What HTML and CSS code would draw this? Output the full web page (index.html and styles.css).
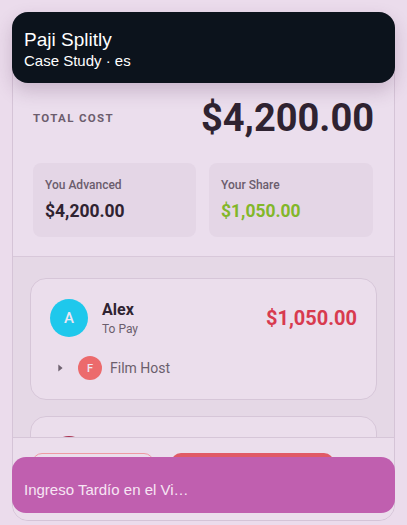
FILE: index.html
```html
<!DOCTYPE html>
<html lang="es">
<head>
<meta charset="utf-8">
<title>Paji Splitly</title>
<link rel="stylesheet" href="styles.css">
</head>
<body>
<div class="card">
  <div class="summary">
    <div class="total-row">
      <span class="total-label">TOTAL COST</span>
      <span class="total-value">$4,200.00</span>
    </div>
    <div class="stats">
      <div class="stat">
        <div class="stat-label">You Advanced</div>
        <div class="stat-value">$4,200.00</div>
      </div>
      <div class="stat">
        <div class="stat-label">Your Share</div>
        <div class="stat-value green">$1,050.00</div>
      </div>
    </div>
  </div>
  <div class="people">
    <div class="person">
      <div class="person-main">
        <div class="avatar cyan">A</div>
        <div class="person-info">
          <div class="person-name">Alex</div>
          <div class="person-sub">To Pay</div>
        </div>
        <div class="person-amount">$1,050.00</div>
      </div>
      <div class="person-detail">
        <svg class="caret" width="5" height="8" viewBox="0 0 5 8"><path d="M0.3 0.5 L4.6 4 L0.3 7.5 Z" fill="#6e6270"/></svg>
        <div class="avatar small coral">F</div>
        <span class="detail-name">Film Host</span>
      </div>
    </div>
    <div class="person">
      <div class="person-main">
        <div class="avatar rose">M</div>
        <div class="person-info">
          <div class="person-name">Maya</div>
          <div class="person-sub">To Pay</div>
        </div>
        <div class="person-amount">$1,050.00</div>
      </div>
    </div>
  </div>
  <div class="footer">
    <button class="btn outline">Cancel</button>
    <button class="btn filled">Settle</button>
  </div>
</div>

<div class="header-overlay">
  <div class="app-title">Paji Splitly</div>
  <div class="app-sub">Case Study · es</div>
</div>

<div class="banner">Ingreso Tardío en el Vi…</div>
</body>
</html>
```

FILE: styles.css
```css
* { box-sizing: border-box; }

html, body {
  margin: 0;
  padding: 0;
  background: #ebdcec;
  font-family: Roboto, "Liberation Sans", sans-serif;
  overflow: hidden;
}

body {
  width: 407px;
  height: 525px;
  position: relative;
}

.card {
  margin: 12px 12px 0 12px;
  height: 509px;
  border: 1px solid #d5c4d7;
  border-radius: 16px;
  background: #ebdeed;
  overflow: hidden;
  display: flex;
  flex-direction: column;
}

.summary {
  padding: 81px 20px 19px 20px;
  border-bottom: 1px solid #d8c8da;
}

.total-row {
  display: flex;
  justify-content: space-between;
  align-items: center;
  height: 48px;
}

.total-label {
  font-size: 11.5px;
  font-weight: 700;
  letter-spacing: 1.35px;
  color: #6b5d6d;
}

.total-value {
  font-size: 38px;
  font-weight: 700;
  color: #2f2331;
}

.stats {
  margin-top: 21px;
  display: grid;
  grid-template-columns: 163px 164px;
  column-gap: 13px;
}

.stat {
  height: 74px;
  background: #e4d6e6;
  border-radius: 8px;
  padding: 14px 12px 0 12px;
}

.stat-label {
  font-size: 12px;
  font-weight: 500;
  color: #6b5d6d;
  line-height: 16px;
}

.stat-value {
  margin-top: 7px;
  font-size: 17.5px;
  font-weight: 700;
  color: #2f2331;
  line-height: 22px;
}

.stat-value.green { color: #82b72a; }

.people {
  flex: 1;
  background: #e5d8e6;
  padding: 21px 17px 0 17px;
  display: flex;
  flex-direction: column;
  gap: 16px;
  overflow: hidden;
}

.person {
  flex-shrink: 0;
  border: 1px solid #d6c6d8;
  border-radius: 16px;
  background: #ebdeec;
  padding: 20px 20px 19px 19px;
}

.person + .person { padding-top: 19px; }

.person-main {
  display: flex;
  align-items: center;
  gap: 13px;
}

.person-main .avatar { margin-right: 1px; }

.avatar {
  width: 38px;
  height: 38px;
  border-radius: 50%;
  display: flex;
  align-items: center;
  justify-content: center;
  color: #eee6f3;
  font-size: 15px;
  font-weight: 500;
  flex-shrink: 0;
}

.avatar.cyan { background: #1ec8ec; }
.avatar.rose { background: #a8304f; }
.avatar.coral { background: #ec6a6c; }

.avatar.small {
  width: 24px;
  height: 24px;
  font-size: 11px;
}

.person-info {
  flex: 1;
  display: flex;
  flex-direction: column;
}

.person-name {
  font-size: 16px;
  font-weight: 700;
  color: #2f2331;
  line-height: 20px;
}

.person-sub {
  font-size: 12px;
  color: #6b5e6d;
  line-height: 16px;
  margin-top: 1px;
}

.person-amount {
  font-size: 20px;
  font-weight: 700;
  color: #d83a4f;
  margin-right: -1px;
}

.person-detail {
  margin-top: 19px;
  display: flex;
  align-items: center;
  padding-left: 8px;
}

.caret { margin-right: 15px; }

.detail-name {
  margin-left: 8px;
  font-size: 14px;
  color: #6b5e6d;
}

.footer {
  flex-shrink: 0;
  height: 83px;
  border-top: 1px solid #d6c6d8;
  background: #ebdeec;
  padding: 15px 20px 15px 19px;
  display: flex;
  gap: 17px;
}

.btn {
  height: 44px;
  border-radius: 10px;
  font-family: Roboto, sans-serif;
  font-size: 14px;
  font-weight: 500;
}

.btn.outline {
  width: 122px;
  background: transparent;
  border: 1px solid #ee9aa3;
  color: #e05a66;
}

.btn.filled {
  width: 163px;
  background: #e05a66;
  border: none;
  color: #fff;
}

.header-overlay {
  position: absolute;
  left: 12px;
  top: 12px;
  width: 383px;
  height: 71px;
  background: #0c131c;
  border-radius: 16px;
  padding: 17px 12px 0 12px;
  box-shadow: 0 8px 18px rgba(80, 40, 80, 0.22);
  font-family: "Liberation Sans", Arial, sans-serif;
  color: #ffffff;
}

.app-title {
  font-size: 19px;
  line-height: 22px;
}

.app-sub {
  font-size: 15px;
  line-height: 18px;
  margin-top: 1px;
}

.banner {
  position: absolute;
  left: 12px;
  top: 457px;
  width: 383px;
  height: 56px;
  background: #c05faf;
  border-radius: 14px;
  padding: 23px 12px 0 12px;
  font-family: "Liberation Sans", Arial, sans-serif;
  font-size: 15px;
  line-height: 20px;
  color: #f7e6f4;
}
```
